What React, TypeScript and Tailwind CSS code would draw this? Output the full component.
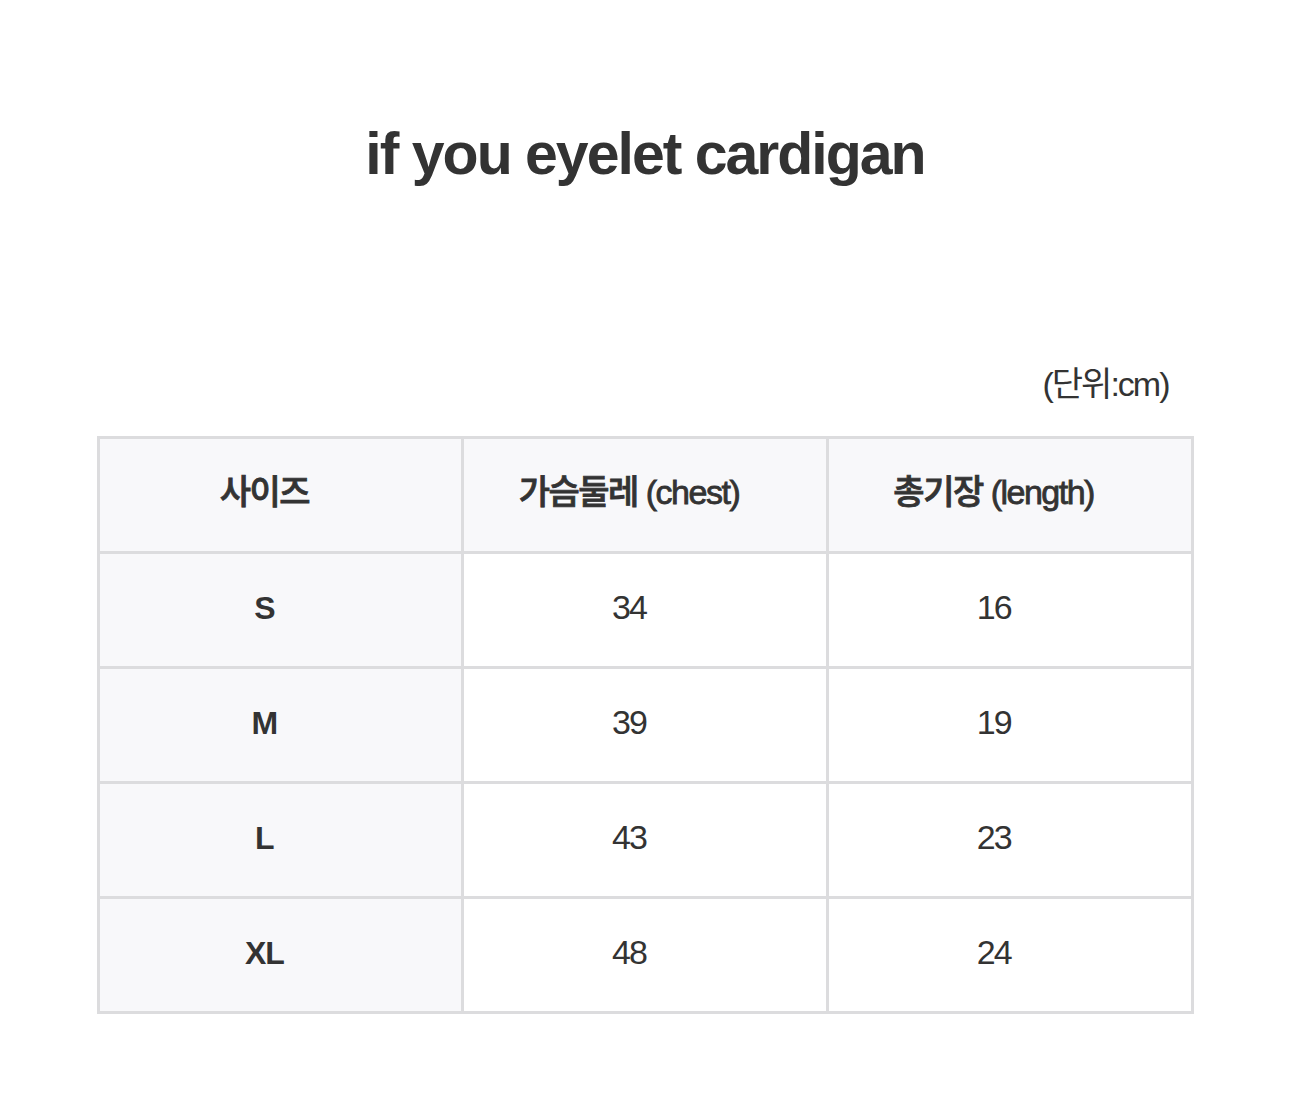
const font = { fontFamily: '"Liberation Sans", "Noto Sans CJK KR", sans-serif' };

const rows = [
  { size: "S", chest: "34", length: "16" },
  { size: "M", chest: "39", length: "19" },
  { size: "L", chest: "43", length: "23" },
  { size: "XL", chest: "48", length: "24" },
];

const cell = "border-[3px] border-[#dcdcde] pr-[32px] pb-[5px]";

export default function App() {
  return (
    <div
      className="min-h-[1093px] w-full bg-white text-[#333333]"
      style={font}
    >
      <h1 className="pt-[118px] text-center text-[59px] font-bold leading-[72px] tracking-[-2px]">
        if you eyelet cardigan
      </h1>
      <div className="mx-auto mt-[174px] w-[1097px]">
        <p className="pr-[25px] text-right text-[34px] leading-[40px] tracking-[-2px]">
          (단위:cm)
        </p>
        <table className="mt-[32px] w-full table-fixed border-collapse text-center">
          <thead>
            <tr className="h-[115px] bg-[#f8f8fa]">
              {["사이즈", "가슴둘레 (chest)", "총기장 (length)"].map((h) => (
                <th
                  key={h}
                  className={`${cell} text-[34px] font-medium tracking-[-1.5px] [-webkit-text-stroke:0.8px_#333333]`}
                >
                  {h}
                </th>
              ))}
            </tr>
          </thead>
          <tbody>
            {rows.map((r) => (
              <tr key={r.size} className="h-[115px]">
                <td className={`${cell} bg-[#f8f8fa] text-[32px] font-bold tracking-[-1px]`}>
                  {r.size}
                </td>
                <td className={`${cell} text-[34px] tracking-[-2px]`}>{r.chest}</td>
                <td className={`${cell} text-[34px] tracking-[-2px]`}>{r.length}</td>
              </tr>
            ))}
          </tbody>
        </table>
      </div>
    </div>
  );
}
